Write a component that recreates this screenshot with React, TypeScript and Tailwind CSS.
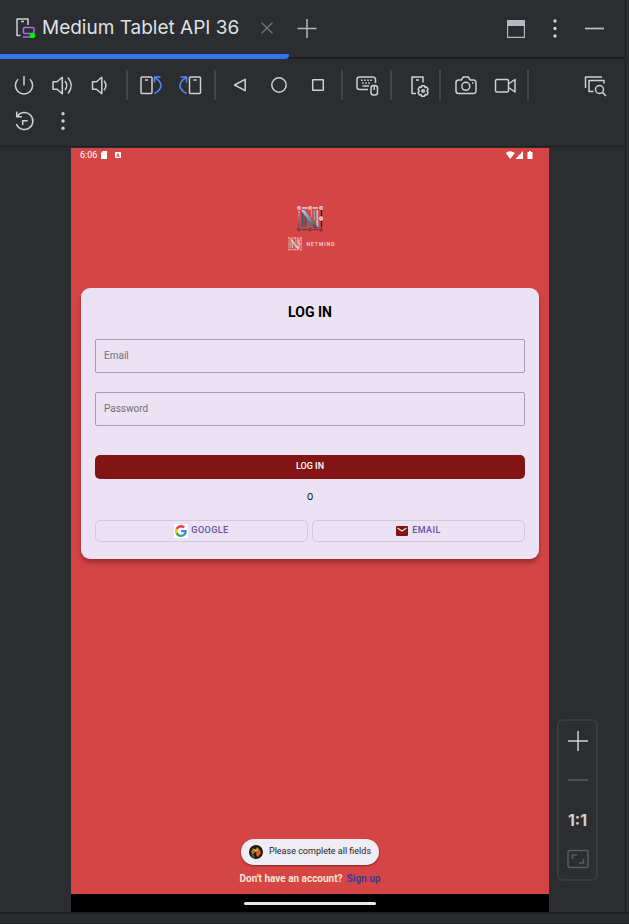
import type { ReactNode } from "react";

function ToolIcon({ label, children }: { label: string; children: ReactNode }) {
  return (
    <button type="button" aria-label={label} className="h-9 w-[39px] shrink-0 text-[#ced0d6]">
      <svg viewBox="0 0 39 36" className="h-9 w-[39px]" fill="none" stroke="currentColor" strokeWidth="1.5" strokeLinejoin="round">
        {children}
      </svg>
    </button>
  );
}

function Separator() {
  return (
    <div className="flex w-2.5 shrink-0 justify-center">
      <div className="h-[30px] w-0.5 bg-[#43454a]" />
    </div>
  );
}

function TabBar() {
  return (
    <header className="flex h-[59px] items-stretch border-b-2 border-[#1e1f22]">
      <div className="-mb-0.5 flex w-[289px] shrink-0 items-center rounded-br-sm border-b-[5px] border-[#3574f0] pt-0.5 pl-[15px]">
        <svg viewBox="0 0 21 22" className="h-[22px] w-[21px] shrink-0" fill="none" strokeWidth="1.5">
          <path d="M5.5 18.5H2V2h11v6" stroke="#ced0d6" strokeLinejoin="round" />
          <path d="M6 4.5h3" stroke="#ced0d6" />
          <rect x="8.5" y="10.5" width="10.5" height="6" rx="1" stroke="#a571e6" />
          <path d="M8 20h8" stroke="#a571e6" />
          <circle cx="17.5" cy="18.5" r="2.8" fill="#00f000" />
        </svg>
        <span className="ml-1.5 text-[19px] leading-6 whitespace-nowrap text-[#dfe1e5]">Medium Tablet API 36</span>
        <button type="button" aria-label="Close tab" className="ml-auto mr-4 text-[#6f737a]">
          <svg viewBox="0 0 12 12" className="size-3" stroke="currentColor" strokeWidth="1.4">
            <path d="M.5.5l11 11M11.5.5l-11 11" />
          </svg>
        </button>
      </div>
      <button type="button" aria-label="New tab" className="ml-2 text-[#b4b8bf]">
        <svg viewBox="0 0 20 20" className="size-5" stroke="currentColor" strokeWidth="1.5">
          <path d="M.5 9.5h19M10 0v19" />
        </svg>
      </button>
      <div className="ml-auto flex items-center gap-5 pr-5 text-[#b4b8bf]">
        <button type="button" aria-label="Window mode">
          <svg viewBox="0 0 18 18" className="h-[18px] w-[18px]">
            <path d="M.5.5h17v17H.5z" fill="none" stroke="currentColor" strokeWidth="1.3" />
            <path d="M0 0h18v6H0z" fill="currentColor" />
          </svg>
        </button>
        <button type="button" aria-label="Options" className="text-[#ced0d6]">
          <svg viewBox="0 0 20 20" className="size-5" fill="currentColor">
            <circle cx="10" cy="2" r="1.7" />
            <circle cx="10" cy="9.5" r="1.7" />
            <circle cx="10" cy="17" r="1.7" />
          </svg>
        </button>
        <button type="button" aria-label="Hide">
          <svg viewBox="0 0 20 20" className="size-5" stroke="currentColor" strokeWidth="1.8">
            <path d="M0 9.500h19" />
          </svg>
        </button>
      </div>
    </header>
  );
}

function Toolbar() {
  return (
    <div className="border-b border-[#1e1f22] pt-2 pr-2.5 pb-[7px] pl-[5px]">
      <div className="flex items-center">
        <ToolIcon label="Power">
          <path d="M13 12.2a8.6 8.6 0 1 0 12 0M19 9v9.5" />
        </ToolIcon>
        <ToolIcon label="Volume up">
          <path d="M9 14.8h4l5.3-4.6v16.6L13 22.2H9zM21 14q3.6 4.5 0 9M24 10.5q6.5 8 0 16" />
        </ToolIcon>
        <ToolIcon label="Volume down">
          <path d="M9.500 14.8h4l5.3-4.6v16.6L13.500 22.2h-4zM21 13.8q4 4.7 0 9.4" />
        </ToolIcon>
        <Separator />
        <ToolIcon label="Rotate left">
          <rect x="9" y="10" width="11" height="16.5" rx="1" />
          <path d="M13 13h3" />
          <path d="M22.5 15.5V10h6M22.5 10.3Q29 14 29 18.500T22.5 26.500" stroke="#548af7" />
        </ToolIcon>
        <ToolIcon label="Rotate right">
          <rect x="18.500" y="10" width="11" height="16.5" rx="1" />
          <path d="M22.500 13h3" />
          <path d="M15.500 15.500V10h-6M15.500 10.300Q9 14 9 18.500T15.500 26.500" stroke="#548af7" />
        </ToolIcon>
        <Separator />
        <ToolIcon label="Back">
          <path d="M14.500 18L25.200 12.300v11.400z" />
        </ToolIcon>
        <ToolIcon label="Home">
          <circle cx="20" cy="18" r="7.2" />
        </ToolIcon>
        <ToolIcon label="Overview">
          <rect x="14.700" y="12.700" width="10.600" height="10.600" rx=".5" />
        </ToolIcon>
        <Separator />
        <ToolIcon label="Hardware input">
          <path d="M21 22.500H12.500a2.500 2.500 0 0 1-2.500-2.500V12.500A2.500 2.500 0 0 1 12.500 10h13.500a2.500 2.500 0 0 1 2.500 2.500V16M15.500 19h6.500" />
          <path d="M14 13.300h12M15 16h9" strokeDasharray="1.600 1.500" />
          <rect x="24" y="18.500" width="6.500" height="9.500" rx="2.500" />
          <path d="M27.200 19v4" />
        </ToolIcon>
        <Separator />
        <ToolIcon label="Device settings">
          <path d="M20 26.500h-4V10h11v5.500M20 13h3" />
          <path d="M25.700 18.700h2.800l.6 1.700 1.700-.3 1.300 2.300-1.100 1.600 1.100 1.600-1.300 2.300-1.700-.3-.6 1.700h-2.800l-.6-1.700-1.700.3-1.300-2.300 1.100-1.600-1.100-1.600 1.300-2.300 1.700.3z" />
          <circle cx="27.100" cy="24" r="1.200" />
        </ToolIcon>
        <Separator />
        <ToolIcon label="Take screenshot">
          <path d="M13.500 13h2.800l2-3h5l2 3h3.200a2.500 2.500 0 0 1 2.500 2.500V24a2.500 2.500 0 0 1-2.500 2.500h-15A2.500 2.500 0 0 1 11 24v-8.500A2.500 2.500 0 0 1 13.500 13z" />
          <circle cx="20.800" cy="19.300" r="4" />
          <path d="M27 16h1.500" />
        </ToolIcon>
        <ToolIcon label="Record screen">
          <rect x="11.500" y="12.500" width="13" height="12.500" rx="1.500" />
          <path d="M24.500 17l6.500-4.500v12.500l-6.500-4.500" />
        </ToolIcon>
        <Separator />
        <div className="ml-auto flex">
          <ToolIcon label="UI check">
            <path d="M9.500 21V10h16.500M17.500 24.500H13V13.500h15v3" />
            <circle cx="23.500" cy="22.500" r="4" />
            <path d="M26.400 25.400l3.600 3.600" />
          </ToolIcon>
        </div>
      </div>
      <div className="flex">
        <ToolIcon label="Snapshots">
          <path d="M12.200 13.500a8.500 8.500 0 1 1-.8 7.500M11.700 8.500v5.200h5.300M17.700 22v-4.300h5" />
        </ToolIcon>
        <ToolIcon label="More">
          <g fill="currentColor" stroke="none">
            <circle cx="19" cy="10.700" r="1.700" />
            <circle cx="19" cy="18" r="1.700" />
            <circle cx="19" cy="25.300" r="1.700" />
          </g>
        </ToolIcon>
      </div>
    </div>
  );
}

function Emblem({ className, tint }: { className: string; tint: string }) {
  const steel = tint === "steel";
  return (
    <svg viewBox="0 0 26 26" className={className} fill="none">
      <defs>
        <linearGradient id={tint} gradientUnits="userSpaceOnUse" x1="4" y1="4" x2="21" y2="22">
          <stop offset="0" stopColor={steel ? "#b5d6de" : "#f5eeee"} />
          <stop offset=".5" stopColor={steel ? "#6b93a6" : "#d3c3c5"} />
          <stop offset="1" stopColor={steel ? "#2c4657" : "#eee6e7"} />
        </linearGradient>
        <linearGradient id={tint + "-frame"} gradientUnits="userSpaceOnUse" x1="0" y1="0" x2="0" y2="25">
          <stop offset="0" stopColor="#f6e4e4" />
          <stop offset=".5" stopColor={steel ? "#a9696c" : "#e8cccd"} />
          <stop offset="1" stopColor={steel ? "#54383d" : "#e8cccd"} />
        </linearGradient>
      </defs>
      <path d="M5 2h5.500M15.500 2h5.500M5 23.500h5.500M15.500 23.500h5.500M2 5v5M2 15v6" stroke={`url(#${tint}-frame)`} strokeWidth="1.300" />
      <path d="M24.500 4v6M24.500 15v6" stroke={steel ? "#251e22" : "#eee1e2"} strokeWidth="1.300" />
      <path d="M5.500 7v14M8.500 10v11" stroke={steel ? "#3d5b6d" : "#c9bcbe"} strokeWidth="1.900" />
      <path d="M11.500 14v7M14.300 17v4" stroke={steel ? "#8d5e66" : "#c79a9e"} strokeWidth="1.200" />
      <path d="M14.500 4v7M17.300 4v10" stroke={steel ? "#c09297" : "#e6cfd0"} strokeWidth="1.300" />
      <path d="M20.300 4v17" stroke={steel ? "#a9c4cd" : "#eee3e4"} strokeWidth="2" />
      <path d="M4 4h3.500L21.300 22H17z" fill={`url(#${tint})`} />
      <g stroke={`url(#${tint}-frame)`} strokeWidth="1.200" fill="#d54545">
        <circle cx="2" cy="2" r="1.300" />
        <circle cx="13" cy="2" r="1.300" />
        <circle cx="24" cy="2" r="1.300" />
        <circle cx="2" cy="12.500" r="1.300" />
        <circle cx="2" cy="23.500" r="1.300" />
        <circle cx="13" cy="23.500" r="1.300" />
        <circle cx="24" cy="23.500" r="1.300" />
      </g>
      <circle cx="24" cy="12.500" r="1.300" stroke="#f6eeee" strokeWidth="1.200" />
    </svg>
  );
}

function StatusBar() {
  return (
    <div className="flex h-3.5 items-center pr-4 pl-[9px] text-white">
      <span className="text-[9px] leading-[14px]">6:06</span>
      <svg viewBox="0 0 6 8" className="ml-1 h-2 w-1.5" fill="currentColor">
        <path d="M2 0h4v8H0V2z" />
      </svg>
      <svg viewBox="0 0 6 6" className="ml-2 size-1.5">
        <rect width="6" height="6" rx=".8" fill="currentColor" />
        <path d="M1.700 5L3 1.300 4.300 5M2 3.800h2" fill="none" stroke="#d54545" strokeWidth=".8" />
      </svg>
      <svg viewBox="0 0 28 8" className="ml-auto h-2 w-7" fill="currentColor">
        <path d="M.8 2Q5-1.500 9.800 2L5.300 8zM18 0v8h-7.500zM22.500 1H24V0h2v1h1.500v7h-5z" />
      </svg>
    </div>
  );
}

function GoogleIcon() {
  return (
    <span className="flex size-3.5 items-center justify-center bg-white">
      <svg viewBox="0 0 48 48" className="size-3">
        <path fill="#ea4335" d="M24 9.500c3.500 0 6.700 1.200 9.200 3.600l6.900-6.900C35.900 2.400 30.500 0 24 0 14.600 0 6.500 5.400 2.600 13.200l8 6.200C12.400 13.700 17.700 9.500 24 9.500z" />
        <path fill="#4285f4" d="M47 24.600c0-1.600-.2-3.100-.4-4.600H24v9h12.900c-.6 3-2.300 5.500-4.800 7.200l7.700 6C44.400 38 47 31.800 47 24.600z" />
        <path fill="#fbbc05" d="M10.500 28.600a14.500 14.500 0 0 1 0-9.200l-8-6.200a24 24 0 0 0 0 21.600z" />
        <path fill="#34a853" d="M24 48c6.500 0 11.900-2.100 15.900-5.800l-7.700-6c-2.200 1.500-4.900 2.300-8.200 2.300-6.300 0-11.600-4.200-13.500-9.900l-8 6.200C6.500 42.600 14.600 48 24 48z" />
      </svg>
    </span>
  );
}

function LoginCard() {
  return (
    <form
      onSubmit={(e) => e.preventDefault()}
      className="mx-2.5 rounded-[9px] bg-[#ebe3f3] px-3.5 pt-3.5 pb-[17px] shadow-[0_4px_5px_rgba(80,10,20,0.4)]"
    >
      <h1 className="text-center text-sm leading-5 font-bold text-black">LOG IN</h1>
      <input
        type="email"
        aria-label="Email"
        placeholder="Email"
        className="mt-[17px] block h-[34px] w-full rounded-xs border border-[#a49daf] bg-transparent px-2 pb-px text-[10px] text-black placeholder:text-[#736d7b]"
      />
      <input
        type="password"
        aria-label="Password"
        placeholder="Password"
        className="mt-[19px] block h-[34px] w-full rounded-xs border border-[#a49daf] bg-transparent px-2 pb-px text-[10px] text-black placeholder:text-[#736d7b]"
      />
      <button type="submit" className="mt-[29px] block h-6 w-full rounded-[5px] bg-[#821514] text-[9px] font-medium text-white">
        LOG IN
      </button>
      <p className="mt-2.5 mb-3.5 text-center text-[9px] leading-[17px] text-black">O</p>
      <div className="grid grid-cols-2 gap-1 text-[9px] font-medium tracking-wider text-[#6550a4]">
        <button type="button" className="flex h-[22px] items-center justify-center gap-[3px] rounded-[5px] border border-[#d2cadb]">
          <GoogleIcon />
          GOOGLE
        </button>
        <button type="button" className="flex h-[22px] items-center justify-center gap-1 rounded-[5px] border border-[#d2cadb]">
          <svg viewBox="0 0 12 10" className="h-2.5 w-3">
            <rect width="12" height="10" rx="1" fill="#821514" />
            <path d="M1.500 2L6 5l4.500-3" fill="none" stroke="#ebe3f3" strokeWidth="1.200" />
          </svg>
          EMAIL
        </button>
      </div>
    </form>
  );
}

function Toast() {
  return (
    <div role="status" className="mx-auto flex h-[26px] items-center gap-1.5 rounded-full bg-[#efedf4] px-2 shadow-[0_1px_2px_rgba(60,0,0,0.5)]">
      <svg viewBox="0 0 14 14" className="size-3.5">
        <circle cx="7" cy="7" r="7" fill="#20170e" />
        <path d="M2 7l2-4 2 2 2-3 3 3-2 3-3-1-2 3z" fill="#a87b2b" />
        <path d="M8 6l3-1 1 3-3 4-2-2z" fill="#e35a2a" />
        <path d="M2 9l3 1 1 3-3-1z" fill="#167348" />
        <path d="M5 4l2 2 2-2" fill="none" stroke="#eed27d" strokeWidth="1" />
      </svg>
      <span className="text-[9px] whitespace-nowrap text-[#24222a]">Please complete all fields</span>
    </div>
  );
}

function Tablet() {
  return (
    <div className="flex min-w-0 flex-1 flex-col bg-[#d54545] font-[Roboto,sans-serif]">
      <StatusBar />
      <div className="mb-9 flex flex-col items-center gap-1 pt-11">
        <Emblem className="size-[26px]" tint="steel" />
        <div className="flex items-center gap-1 pl-1">
          <Emblem className="h-4 w-3.5" tint="silver" />
          <span className="text-[5px] leading-4 font-medium tracking-[1px] text-[#f3dfe0]">NETMIND</span>
        </div>
      </div>
      <LoginCard />
      <div className="mt-auto flex flex-col pt-10">
        <Toast />
        <p className="flex h-[29px] items-center justify-center gap-1 pb-0.5 text-[10px] font-bold text-[#fbe4d5]">
          Don't have an account?
          <a href="#signup" className="text-[#403a9e]">Sign up</a>
        </p>
      </div>
      <div className="flex h-[18px] items-center justify-center bg-black">
        <div className="h-[3px] w-[132px] rounded-full bg-[#e9e8e5]" />
      </div>
    </div>
  );
}

function ZoomControls() {
  return (
    <div className="flex w-[41px] flex-col items-center rounded-md border-2 border-[#393b3f] pt-2.5 pb-2.5 text-[#ced0d6]">
      <button type="button" aria-label="Zoom in">
        <svg viewBox="0 0 20 20" className="size-5" stroke="currentColor" strokeWidth="1.500">
          <path d="M0 10h20M10 0v20" />
        </svg>
      </button>
      <button type="button" aria-label="Zoom out" className="mt-[19px] text-[#5a5d63]">
        <svg viewBox="0 0 20 20" className="size-5" stroke="currentColor" strokeWidth="1.500">
          <path d="M0 10h20" />
        </svg>
      </button>
      <button type="button" className="mt-[18px] text-base leading-6 font-bold">1:1</button>
      <button type="button" aria-label="Fit to window" className="mt-[17px] text-[#5a5d63]">
        <svg viewBox="0 0 22 20" className="h-5 w-[22px]" fill="none" stroke="currentColor" strokeWidth="1.500">
          <rect x="1" y="1.500" width="20" height="17" rx="2" />
          <path d="M5.500 10V6H10M12 14h4.500v-4" />
        </svg>
      </button>
    </div>
  );
}

export default function App() {
  return (
    <div className="flex min-h-screen flex-col bg-[#2b2d30] font-[Inter,sans-serif]">
      <div className="mr-[3px] flex flex-1 flex-col border-r border-[#1e1f22]">
        <TabBar />
        <Toolbar />
        <main className="flex flex-1 pt-px pl-[71px]">
          <Tablet />
          <aside className="flex w-[76px] shrink-0 items-end pb-[31px] pl-2">
            <ZoomControls />
          </aside>
        </main>
      </div>
      <footer className="h-3 border-t-2 border-b border-[#1e1f22]" />
    </div>
  );
}
